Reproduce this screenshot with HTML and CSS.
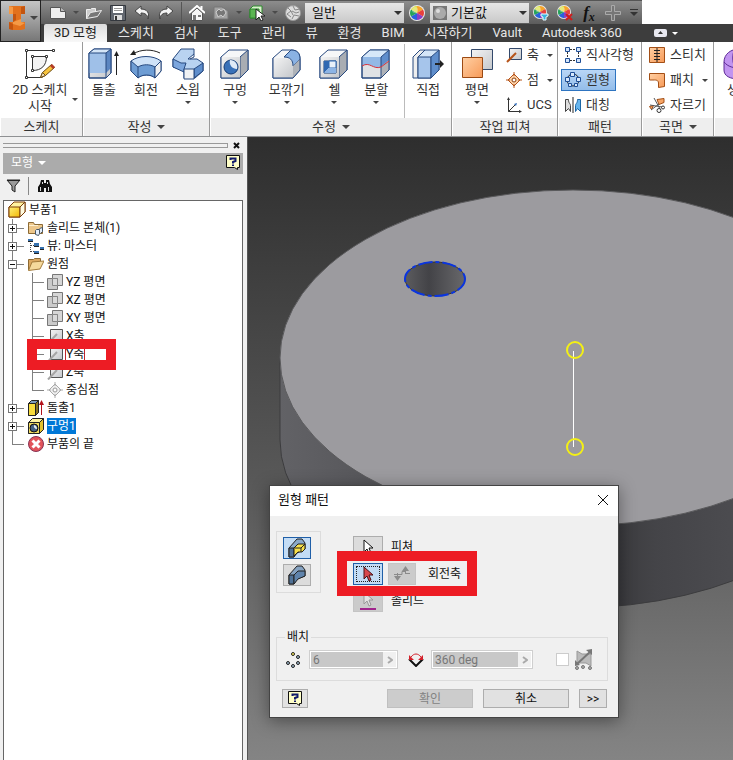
FILE: index.html
```html
<!DOCTYPE html>
<html lang="ko">
<head>
  <meta charset="UTF-8" />
  <meta name="viewport" content="width=device-width, initial-scale=1.0" />
  <title>부품1</title>
  <link rel="stylesheet" href="styles.css">
</head>
<body>
  <svg class="defs" aria-hidden="true">
    <defs>
      <linearGradient id="blue" x1="0" y1="0" x2="1" y2="1"><stop offset="0" stop-color="#cfe2f7"/><stop offset="1" stop-color="#6c9bd6"/></linearGradient>
      <linearGradient id="grey" x1="0" y1="0" x2="1" y2="1"><stop offset="0" stop-color="#f4f4f4"/><stop offset="1" stop-color="#c4c7cb"/></linearGradient>
      <linearGradient id="orange" x1="0" y1="0" x2="1" y2="1"><stop offset="0" stop-color="#ffd0a4"/><stop offset="1" stop-color="#f79a58"/></linearGradient>
      <linearGradient id="yellow" x1="0" y1="0" x2="1" y2="1"><stop offset="0" stop-color="#fff27a"/><stop offset="1" stop-color="#f2b705"/></linearGradient>
    </defs>
    <symbol id="wheel" viewBox="0 0 16 16">
      <circle cx="8" cy="8" r="8" fill="#e9e9e9"/>
      <path d="M8 8V1a7 7 0 0 1 6 3.500z" fill="#f7a52b"/>
      <path d="M8 8l6-3.500a7 7 0 0 1 0 7z" fill="#e8413c"/>
      <path d="M8 8l6 3.500A7 7 0 0 1 8 15z" fill="#8d3cc4"/>
      <path d="M8 8v7a7 7 0 0 1-6-3.500z" fill="#2a62dc"/>
      <path d="M8 8l-6 3.500a7 7 0 0 1 0-7z" fill="#27a35a"/>
      <path d="M8 8L2 4.500A7 7 0 0 1 8 1z" fill="#d8df3a"/>
      <circle cx="6" cy="5" r="3" fill="#fff" opacity=".35"/>
    </symbol>
    <symbol id="plane" viewBox="0 0 16 16">
      <path d="M5.500.5h10v11h-10z" fill="#d6d6d6" stroke="#777"/>
      <path d="M.5 4.500h10v11H.5z" fill="#bdbdbd" fill-opacity=".8" stroke="#777"/>
      <path d="M5.500 4.500h5v7h-5z" fill="#d9d9d9" stroke="#888"/>
    </symbol>
    <symbol id="axis" viewBox="0 0 16 16">
      <path d="M3.500 1.500h12v12h-12z" fill="url(#grey)" stroke="#555"/>
      <path d="M1 15.500L10 6" stroke="#a5a5a5" stroke-width="2"/>
    </symbol>
    <symbol id="help" viewBox="0 0 14 15">
      <path d="M.5.5h13v12h-2v2l-3-2h-8z" fill="#ffffc8" stroke="#111"/>
      <path d="M4.500 5V3.500h5v2.500L7 7v1.500M7 9.500v1.500" fill="none" stroke="#111a6b" stroke-width="2"/>
    </symbol>
    <symbol id="cursor" viewBox="0 0 12 16">
      <path d="M2 1v12l3-3 2 5 2-1-2-5h4z" stroke-width="1"/>
    </symbol>
  </svg>

  <header class="titlebar">
    <button class="app-button" aria-label="Inventor">
      <svg width="18" height="26" viewBox="0 0 18 26">
        <path d="M1 1h16v8h-4v8h4v7l-4 1H5l-4-1v-7h4V9H1z" fill="#e2711d"/>
        <path d="M1 1l4 1v7H1zM5 17l8-3v3l4 1-5 3-7-2z" fill="#f59a45"/>
        <path d="M13 2l4-1v8h-4zM5 9h3v6l-3 2zM1 17l4 2v6l-4-1z" fill="#c4550f"/>
      </svg>
      <span class="caret wide"></span>
    </button>

    <div class="quick-access">
      <button aria-label="새로 만들기"><svg width="16" height="16" viewBox="0 0 16 16"><path d="M.5 2.500h10l5 4v7H.5z" fill="#eee" stroke="#555"/><path d="M10.500 2.500v4h5" fill="#bbb" stroke="#555"/></svg></button>
      <span class="drop"><span class="caret dim"></span></span>
      <button aria-label="열기"><svg width="16" height="16" viewBox="0 0 16 16"><path d="M.5 13.500V4.500h4l1-1h4v3" fill="#ccc" stroke="#eee"/><path d="M.5 13.500l4-6 11-2-4 6z" fill="#777" stroke="#eee"/></svg></button>
      <button aria-label="저장"><svg width="16" height="16" viewBox="0 0 16 16"><path d="M.5.5h15v15H.5z" fill="#636870" stroke="#34383e"/><path d="M3 1h10v7H3z" fill="#fff"/><path d="M4 3.500h8M4 5.500h8" stroke="#999"/><path d="M4 10h8v5H4z" fill="#ddd"/><path d="M5 11h2v4H5z" fill="#333"/></svg></button>
      <button aria-label="실행 취소"><svg width="16" height="16" viewBox="0 0 16 16"><path d="M1 6l6-5v3c6 0 9 4 7 10 0-4-3-6-7-6v3z" fill="#f3f3f3" stroke="#444"/></svg></button>
      <button aria-label="다시 실행"><svg width="16" height="16" viewBox="0 0 16 16"><path d="M15 6L9 1v3c-6 0-9 4-7 10 0-4 3-6 7-6v3z" fill="#f3f3f3" stroke="#444"/></svg></button>
      <span class="rule"></span>
      <button aria-label="홈"><svg width="16" height="16" viewBox="0 0 16 16"><path d="M2.500 8v7.500h11V8L8 3z" fill="#f6f6f6" stroke="#555"/><path d="M0 8l8-7 8 7M12.500 1v3" fill="none" stroke="#fff" stroke-width="2"/><path d="M4 10h3v5H4zM9 10h3v2H9z" fill="#777"/></svg></button>
      <button aria-label="투영"><svg width="16" height="16" viewBox="0 0 16 16"><path d="M1 2h8l6 4v8H1z" fill="#a4a4a4" stroke="#777"/><path d="M3 7l3-3 2 2 3-2 2 4-3 4-2-2-3 2z" fill="#777" stroke="#ccc"/></svg></button>
      <span class="drop"><span class="caret dim"></span></span>
      <button aria-label="선택"><svg width="16" height="16" viewBox="0 0 16 16"><path d="M1 4l3-3h9v9l-3 3H1z" fill="#d9f2cc" stroke="#2f8a2f"/><path d="M1 4h9v9H1z" fill="#5bb552" stroke="#2f8a2f"/><path d="M7 4v11l3-3 2 4 2-1-2-4h4z" fill="#fff" stroke="#222"/></svg></button>
      <span class="drop"><span class="caret dim"></span></span>
      <button aria-label="재질"><svg width="16" height="16" viewBox="0 0 16 16"><circle cx="8" cy="8" r="7.500" fill="#ddd" stroke="#999"/><path d="M3 3l3 3-4 3 4 3M8 1l2 4 5-1M7 6l4 2 3-1M7 14l2-4 5 1M6 6l2 4" fill="none" stroke="#888"/></svg></button>
      <span class="combo"><select aria-label="재질"><option>일반</option></select></span>
      <button class="wheel-button" aria-label="모양"><svg width="16" height="16"><use href="#wheel"/></svg></button>
      <span class="combo">
        <svg width="14" height="14" viewBox="0 0 14 14"><path d="M0 0h14v14H0z" fill="#777"/><circle cx="7" cy="7" r="6" fill="#aaa"/><circle cx="5" cy="5" r="2" fill="#ddd"/></svg>
        <select aria-label="모양"><option>기본값</option></select>
      </span>
      <button aria-label="모양 조정"><svg width="16" height="16" viewBox="0 0 16 16"><use href="#wheel" width="14" height="14"/><path d="M8 9h7v2l-2 1v3h-3v-3l-2-1z" fill="#3bb2df" stroke="#e8f8ff"/></svg></button>
      <button aria-label="모양 지우기"><svg width="16" height="16" viewBox="0 0 16 16"><use href="#wheel" width="14" height="14"/><path d="M9 9l6 6M15 9l-6 6" stroke="#d11b1b" stroke-width="2"/></svg></button>
      <button class="fx" aria-label="매개변수">f<sub>x</sub></button>
      <button aria-label="추가"><svg width="16" height="16" viewBox="0 0 16 16"><path d="M6.500.5h3v6h6v3h-6v6h-3v-6h-6v-3h6z" fill="#777" stroke="#aaa"/></svg></button>
      <button class="more" aria-label="사용자화"><svg width="8" height="8" viewBox="0 0 8 8"><path d="M0 .5h8" stroke="#333"/><path d="M0 3h8L4 7z" fill="#333"/></svg></button>
    </div>

    <nav class="tabs">
      <a class="active" href="#">3D 모형</a>
      <a href="#">스케치</a>
      <a href="#">검사</a>
      <a href="#">도구</a>
      <a href="#">관리</a>
      <a href="#">뷰</a>
      <a href="#">환경</a>
      <a href="#">BIM</a>
      <a href="#">시작하기</a>
      <a href="#">Vault</a>
      <a href="#">Autodesk 360</a>
      <button class="collapse" aria-label="리본 최소화"><svg width="13" height="8" viewBox="0 0 13 8"><rect width="13" height="8" rx="2" fill="#e8e8f0"/><path d="M4 5h5L6.500 2z" fill="#333"/></svg><span class="caret light"></span></button>
    </nav>
  </header>

  <section class="ribbon">
    <div class="panel sketch">
      <div class="tools">
        <button class="big">
          <svg width="32" height="32" viewBox="0 0 32 32"><path d="M2.500 2.500h27M2.500 2.500v27h16" fill="none" stroke="#333"/><path d="M8.500 8.500h14c0 9-5 14-14 14z" fill="#f3f3f3" stroke="#333"/><path d="M1.500 1.500h2v2h-2zM28.500 1.500h2v2h-2zM1.500 28.500h2v2h-2zM7.500 7.500h2v2h-2zM21.500 7.500h2v2h-2zM7.500 21.500h2v2h-2z" fill="#fff" stroke="#333"/><path d="M16.500 29.500l2-5 9-8 3 3-9 8z" fill="#f7c33c" stroke="#6b4b12"/><path d="M16.500 29.500l2-5 3 3z" fill="#f6e3c0" stroke="#6b4b12"/><path d="M26 18l3 3 2-2-3-3z" fill="#b63c28"/></svg>
          <span>2D 스케치<br>시작</span>
        </button>
        <span class="caret side"></span>
      </div>
      <h2>스케치</h2>
    </div>

    <div class="panel create">
      <div class="tools">
        <button class="big">
          <svg width="32" height="32" viewBox="0 0 32 32"><path d="M1 5l5-4h17v24l-5 5H1z" fill="url(#grey)" stroke="#27497f"/><path d="M1 5h17v20H1z" fill="#9fc0e8"/><path d="M1 5l5-4h17l-5 4z" fill="#d4e5f7"/><path d="M18 5l5-4v19l-5 5z" fill="#5b86c1"/><path d="M1 5l5-4h17v24l-5 5H1zM1 5h17v25M18 5l5-4" fill="none" stroke="#27497f"/><path d="M28.500 27V7" stroke="#222" stroke-width="1"/><path d="M26 8l2.500-5L31 8z" fill="#222"/></svg>
          <span>돌출</span>
        </button>
        <button class="big">
          <svg width="32" height="32" viewBox="0 0 32 32"><path d="M1 13c8-6 22-6 30 0v10l-6 7c-4-4-13-4-17 0l-7-7z" fill="#cfe2f7" stroke="#27497f"/><path d="M1 13l7 6c5-3 12-3 17 0v11c-4-4-13-4-17 0l-7-7z" fill="#6e9dd4" stroke="#27497f"/><path d="M25 19l6-6v10l-6 7z" fill="#f2f2f2" stroke="#27497f"/><path d="M8 19v11" stroke="#27497f"/><path d="M3 6c8-5 19-5 27-1" fill="none" stroke="#222"/><path d="M0 7l4-5 2 5z" fill="#222"/></svg>
          <span>회전</span>
        </button>
        <button class="big">
          <svg width="32" height="32" viewBox="0 0 32 32"><path d="M1 11L9 1h13v5l-6 5h9l6 4v8l-8 7H12v-8L1 19z" fill="#b9d3f1" stroke="#27497f"/><path d="M1 11l8 4h5l-2 6v3L1 19z" fill="#7ca6dd" stroke="#27497f"/><path d="M22 21l9-6v8l-9 7z" fill="#5f8ecc" stroke="#27497f"/><path d="M22 6v3l-4 2" fill="none" stroke="#27497f"/><path d="M12 21h10v10H12z" fill="#f0f2f4" stroke="#27497f"/></svg>
          <span>스윕</span>
          <span class="caret"></span>
        </button>
      </div>
      <h2>작성 <span class="caret wide"></span></h2>
    </div>

    <div class="panel modify">
      <div class="tools">
        <button class="big">
          <svg width="32" height="32" viewBox="0 0 32 32"><path d="M2 9l8-7h19v20l-8 8H2z" fill="#f6f7f8" stroke="#27497f"/><path d="M21 9l8-7v20l-8 8z" fill="#a9adb3" stroke="#27497f"/><path d="M2 9h19v21H2z" fill="url(#grey)"/><path d="M2 9v21h19" fill="none" stroke="#27497f"/><circle cx="12" cy="19" r="7" fill="#3971b8" stroke="#153c75"/><path d="M11 12a7 7 0 0 1 7 9 7 7 0 0 1-7-9z" fill="#dfeaf7"/></svg>
          <span>구멍</span>
          <span class="caret"></span>
        </button>
        <button class="big fillet">
          <svg width="32" height="32" viewBox="0 0 32 32"><path d="M2 10l9-8h9c6 0 9 3 9 9v11l-7 8H2z" fill="#f6f7f8" stroke="#27497f"/><path d="M2 10h11c6 0 9 3 9 9v11H2z" fill="url(#grey)"/><path d="M13 9l7-7c6 0 9 3 9 9l-7 7c0-6-3-9-9-9z" fill="#8ab2e4" stroke="#27497f"/><path d="M22 18l7-7v11l-7 8z" fill="#aeb2b8"/><path d="M2 10v20h20l7-8V11" fill="none" stroke="#27497f"/></svg>
          <span>모깎기</span>
          <span class="caret"></span>
        </button>
        <button class="big">
          <svg width="32" height="32" viewBox="0 0 32 32"><path d="M2 9l8-7h19v20l-8 8H2z" fill="#f6f7f8" stroke="#27497f"/><path d="M21 9l8-7v20l-8 8z" fill="#a9adb3" stroke="#27497f"/><path d="M2 9h19v21H2z" fill="url(#grey)"/><path d="M2 9v21h19" fill="none" stroke="#27497f"/><path d="M6 13h12v12H6z" fill="#fff" stroke="#153c75"/><path d="M6 13h5v7l-5 5z" fill="#2f68b2"/><path d="M11 13h7v7h-7z" fill="#e7f0fa" stroke="#2f68b2"/><path d="M6 25l5-5h7v5z" fill="#8cb4e5"/></svg>
          <span>쉘</span>
          <span class="caret"></span>
        </button>
        <button class="big">
          <svg width="32" height="32" viewBox="0 0 32 32"><path d="M2 9l8-7h19v20l-8 8H2z" fill="#e0e2e5" stroke="#27497f"/><path d="M2 9l8-7h19l-8 7z" fill="#d7e8f9"/><path d="M2 9h19v10c-7 3-10-5-19-1z" fill="#93b9e6"/><path d="M21 9l8-7v10l-8 7z" fill="#5f8ecc"/><path d="M21 19l8-7v10l-8 8z" fill="#aeb2b8"/><path d="M21 30V9M2 9l8-7h19v20l-8 8H2zM21 9l8-7" fill="none" stroke="#27497f"/><path d="M2 18c8-5 11 4 19 1l8-6" fill="none" stroke="#d9333b"/></svg>
          <span>분할</span>
          <span class="caret"></span>
        </button>
        <span class="rule"></span>
        <button class="big direct">
          <svg width="32" height="32" viewBox="0 0 32 32"><path d="M1 9l7-7h5v21l-7 7H1z" fill="#eee" stroke="#27497f"/><path d="M6 9l7-7h14v20l-8 8H6z" fill="#d4e5f7" stroke="#27497f"/><path d="M6 9h13v21H6z" fill="#a6c5eb" stroke="#27497f"/><path d="M19 9l8-7v20l-8 8z" fill="#5f8ecc" stroke="#27497f"/><path d="M23 16h6" stroke="#222" stroke-width="2"/><path d="M28 12l4 4-4 4z" fill="#222"/></svg>
          <span>직접</span>
        </button>
      </div>
      <h2>수정 <span class="caret wide"></span></h2>
    </div>

    <div class="panel work">
      <div class="tools">
        <button class="big">
          <svg width="32" height="32" viewBox="0 0 32 32"><path d="M10.500 1.500h21v20h-21z" fill="url(#grey)" stroke="#33496b"/><path d="M1.500 9.500h20v20h-20z" fill="url(#orange)" stroke="#9c4a13"/></svg>
          <span>평면</span>
          <span class="caret"></span>
        </button>
        <div class="stack">
          <button><svg width="16" height="16" viewBox="0 0 16 16"><path d="M3.500 1.500h12v11h-12z" fill="url(#grey)" stroke="#33496b"/><path d="M1 15l9-9" stroke="#b6541a" stroke-width="2"/></svg>축 <span class="caret"></span></button>
          <button><svg width="16" height="16" viewBox="0 0 16 16"><path d="M8 2l6 6-6 6-6-6z" fill="#fbd0a6" stroke="#b6541a"/><path d="M8 0v4M8 12v4M0 8h4M12 8h4" stroke="#b6541a"/><circle cx="8" cy="8" r="2" fill="#fff" stroke="#8c3d0c"/></svg>점 <span class="caret"></span></button>
          <button><svg width="16" height="16" viewBox="0 0 16 16"><path d="M2.500 1v13.500H15M2.500 14.500L10 7" fill="none" stroke="#333"/><path d="M1 3l1.500-3L4 3zM13 13l3 1.500-3 1.500z" fill="#333"/><path d="M8 7l3-1-1 3z" fill="#2b67b5"/></svg>UCS</button>
        </div>
      </div>
      <h2>작업 피쳐</h2>
    </div>

    <div class="panel pattern">
      <div class="tools">
        <div class="stack">
          <button><svg width="16" height="16" viewBox="0 0 16 16"><path d="M5 2.500h6M2.500 5v6M13.500 5v6M5 13.500h6" stroke="#333" stroke-dasharray="2 1"/><path d="M.5.5h4v4h-4zM11.500.5h4v4h-4zM.5 11.500h4v4h-4zM11.500 11.500h4v4h-4z" fill="#d3e4f9" stroke="#1f4e96"/></svg>직사각형</button>
          <button class="on"><svg width="16" height="16" viewBox="0 0 16 16"><circle cx="8" cy="8" r="6" fill="none" stroke="#222"/><path d="M5.500.5h4v4h-4zM11.500 5.500h4v4h-4zM.5 5.500h4v4h-4zM3.500 11.500h3v3h-3zM9.500 11.500h3v3h-3z" fill="#d8e9fc" stroke="#1f4e96"/></svg>원형</button>
          <button><svg width="16" height="16" viewBox="0 0 16 16"><path d="M.5 2.500h3c0 4 2 4 2 6v6l-2-3-3 3z" fill="#ddd" stroke="#444"/><path d="M15.500 2.500h-3c0 4-2 4-2 6v6l2-3 3 3z" fill="#66b5ee" stroke="#1b66a5"/><path d="M8 0v16" stroke="#222"/></svg>대칭</button>
        </div>
      </div>
      <h2>패턴</h2>
    </div>

    <div class="panel surface">
      <div class="tools">
        <div class="stack">
          <button><svg width="16" height="16" viewBox="0 0 16 16"><path d="M.5.5h15v15H.5z" fill="url(#orange)" stroke="#a34f16"/><path d="M8 1v14M5 3.500h6M5 6.500h6M5 9.500h6M5 12.500h6" stroke="#222"/></svg>스티치</button>
          <button><svg width="16" height="16" viewBox="0 0 16 16"><path d="M.5 1.500h15v13l-6 1V11c0-3-3-3-4-3h-5z" fill="url(#orange)" stroke="#a34f16"/></svg>패치 <span class="caret"></span></button>
          <button><svg width="16" height="16" viewBox="0 0 16 16"><path d="M8 2.500l7-1v4l-5 2zM.5 9.500l4-1-2 4z" fill="#f6a566" stroke="#a34f16"/><path d="M5 1l6 11M1 8l12 2M2 13l8-6" stroke="#555"/><circle cx="10" cy="13.500" r="2" fill="#fff" stroke="#333"/><circle cx="14" cy="10.500" r="1.500" fill="#fff" stroke="#333"/></svg>자르기</button>
        </div>
      </div>
      <h2>곡면 <span class="caret wide"></span></h2>
    </div>

    <div class="panel freeform">
      <div class="tools">
        <button class="big">
          <svg width="32" height="32" viewBox="0 0 32 32"><path d="M1 14C1 6 8 1 16 1s15 5 15 13v8c0 6-6 9-15 9S1 28 1 22z" fill="#c194f0" stroke="#5d2a95"/><path d="M1 14c4 5 10 6 15 6s12-2 15-6M12 1c-3 4-3 14 0 18v11" fill="none" stroke="#5d2a95"/></svg>
          <span>생성</span>
        </button>
      </div>
      <h2></h2>
    </div>
  </section>

  <main class="workspace">
    <aside class="browser">
      <div class="grip"><span class="lines"></span><button aria-label="닫기"><svg width="7" height="7" viewBox="0 0 7 7"><path d="M1 1l5 5M6 1L1 6" stroke="#111" stroke-width="2"/></svg></button></div>
      <div class="browser-title"><button class="model">모형 <span class="caret light wide"></span></button><button aria-label="도움말"><svg width="14" height="15"><use href="#help"/></svg></button></div>
      <div class="browser-tools">
        <button aria-label="필터"><svg width="16" height="14" viewBox="0 0 16 14"><path d="M1 1h13l-5 6v6l-3-2V7z" fill="#9a9a9a" stroke="#222"/><path d="M1 1.500h13" stroke="#222"/></svg></button>
        <span class="rule"></span>
        <button aria-label="찾기"><svg width="16" height="14" viewBox="0 0 16 14"><path d="M4 1h3v3h2V1h3l1 4 2 3v5H9V9H7v4H1V8l2-3z" fill="#111"/><path d="M3.500 8v4M11.500 8v4M5.500 3v2M10.500 3v2" stroke="#ddd"/></svg></button>
      </div>

      <div class="tree">
        <div class="node root"><svg width="18" height="18" viewBox="0 0 18 18"><path d="M1 6l5-5h11v10l-5 5H1z" fill="#fff3a0" stroke="#7a3d08"/><path d="M1 6h11v10H1z" fill="url(#yellow)" stroke="#7a3d08"/><path d="M12 6l5-5v10l-5 5z" fill="#fffbe0" stroke="#7a3d08"/></svg>부품1</div>
        <ul class="branch">
          <li><div class="node"><button class="toggle plus" aria-label="펼치기"></button><svg width="16" height="16" viewBox="0 0 16 16"><path d="M.5 13.500v-11h5l1 2h8v9z" fill="#edc78b" stroke="#8c6a34"/><path d="M1 5.500h9" stroke="#fff0cf"/><path d="M7.500 10.500v4l3 1 1-2v-4h-3zM11.500 8.500l3-1v4l-2 2" fill="#e4eefb" stroke="#456"/></svg>솔리드 본체(1)</div></li>
          <li><div class="node"><button class="toggle plus" aria-label="펼치기"></button><svg width="16" height="16" viewBox="0 0 16 16"><path d="M2.500 3v11M3 7.500h4M3 13.500h4M10 8.500h2" stroke="#444" stroke-dasharray="1 1"/><path d="M0 1h5v2H0zM6 5h5v3H6zM12 9h4v2h-4zM6 13h5v2H6z" fill="#3671ae"/><path d="M0 3.500h5M6 8.500h5M12 11.500h4M6 15.500h5" stroke="#222"/></svg>뷰: 마스터</div></li>
          <li>
            <div class="node"><button class="toggle" aria-label="접기"></button><svg width="16" height="16" viewBox="0 0 16 16"><path d="M.5 14V3.500h5l1-1h6v3" fill="#dba861" stroke="#8c6a34"/><path d="M.5 14.500L4 6l12-1-4 8z" fill="#f5d99c" stroke="#a37b3c"/></svg>원점</div>
            <ul class="branch">
              <li><div class="node"><svg width="16" height="16"><use href="#plane"/></svg>YZ 평면</div></li>
              <li><div class="node"><svg width="16" height="16"><use href="#plane"/></svg>XZ 평면</div></li>
              <li><div class="node"><svg width="16" height="16"><use href="#plane"/></svg>XY 평면</div></li>
              <li><div class="node"><svg width="16" height="16"><use href="#axis"/></svg>X축</div></li>
              <li class="marked"><div class="node"><svg width="16" height="16"><use href="#axis"/></svg><span class="hover">Y축</span></div></li>
              <li><div class="node"><svg width="16" height="16"><use href="#axis"/></svg>Z축</div></li>
              <li><div class="node"><svg width="16" height="16" viewBox="0 0 16 16"><path d="M8 2l6 6-6 6-6-6z" fill="#eee" stroke="#aaa"/><path d="M8 0v4M8 12v4M0 8h4M12 8h4" stroke="#aaa"/><circle cx="8" cy="8" r="2" fill="#fff" stroke="#999"/></svg>중심점</div></li>
            </ul>
          </li>
          <li><div class="node"><button class="toggle plus" aria-label="펼치기"></button><svg width="16" height="16" viewBox="0 0 16 16"><path d="M.5 3.500l3-3h7v12l-3 3h-7z" fill="#7d9cbd" stroke="#222"/><path d="M7.500 3.500l3-3v12l-3 3z" fill="#8a7420" stroke="#222"/><path d="M.5 3.500h7v12h-7z" fill="#f8dc3c" stroke="#222"/><path d="M13.500 15V4" stroke="#b4121b"/><path d="M11 5l2.500-5L16 5z" fill="#b4121b"/></svg>돌출1</div></li>
          <li><div class="node"><button class="toggle plus" aria-label="펼치기"></button><svg width="16" height="16" viewBox="0 0 16 16"><path d="M.5 4.500l4-4h11v11l-4 4H.5z" fill="#fdf3a0" stroke="#222"/><path d="M11.500 4.500l4-4v11l-4 4z" fill="#e5c22c" stroke="#222"/><path d="M.5 4.500h11v11H.5z" fill="#f0da60" stroke="#222"/><circle cx="6" cy="10" r="4" fill="#445f80" stroke="#111"/><path d="M6 7a4 4 0 0 1 3 4 3 3 0 0 1-3-4z" fill="#e3ecf5"/></svg><span class="selected">구멍1</span></div></li>
          <li><div class="node"><svg width="16" height="16" viewBox="0 0 16 16"><circle cx="8" cy="8" r="7.500" fill="#e2545a" stroke="#835"/><path d="M4.500 4.500l7 7M11.500 4.500l-7 7" stroke="#fff" stroke-width="3"/></svg>부품의 끝</div></li>
        </ul>
      </div>
    </aside>

    <section class="viewport">
      <svg class="scene" width="100%" height="100%">
        <defs>
          <linearGradient id="side" gradientUnits="userSpaceOnUse" x1="32" y1="0" x2="618" y2="0">
            <stop offset="0" stop-color="#626266"/>
            <stop offset=".25" stop-color="#505054"/>
            <stop offset=".56" stop-color="#39393c"/>
            <stop offset=".64" stop-color="#444448"/>
            <stop offset="1" stop-color="#58585c"/>
          </linearGradient>
          <linearGradient id="bore" x1="0" y1="0" x2="1" y2="0">
            <stop offset="0" stop-color="#5c5c5f"/>
            <stop offset=".4" stop-color="#434347"/>
            <stop offset="1" stop-color="#68686b"/>
          </linearGradient>
        </defs>
        <path d="M32 220v82a293 168 0 0 0 586 0v-82z" fill="url(#side)" stroke="#3c3c3e"/>
        <ellipse cx="325" cy="220" rx="293" ry="168" fill="#9c9b9f" stroke="#5a5a5c"/>
        <ellipse cx="187" cy="141" rx="30" ry="17" fill="url(#bore)" stroke="#333"/>
        <ellipse cx="187" cy="141" rx="30" ry="17" fill="none" stroke="#0a35e0" stroke-width="2" stroke-dasharray="14 3 4 3"/>
        <path d="M325.500 213v96" stroke="#fff"/>
        <circle cx="327" cy="212" r="8" fill="none" stroke="#f4f014" stroke-width="2"/>
        <circle cx="327" cy="309" r="8" fill="none" stroke="#f4f014" stroke-width="2"/>
      </svg>

      <form class="dialog">
        <div class="dialog-title">원형 패턴<button type="button" aria-label="닫기"><svg width="12" height="12" viewBox="0 0 12 12"><path d="M1 1l10 10M11 1L1 11" stroke="#111"/></svg></button></div>
        <div class="dialog-body">
          <div class="pick">
            <div class="modes">
              <button type="button" class="tool on" aria-label="개별 피쳐 패턴"><svg width="18" height="20" viewBox="0 0 18 20"><path d="M1 10l8-9h5l3 4v6l-8 4-3 4H1z" fill="#8aa9c9" stroke="#222"/><path d="M1 10h5v9H1z" fill="#4f7196" stroke="#222"/><path d="M6 10l4-4h7v5l-3 3h-4l-4 4z" fill="#f7e04b" stroke="#222"/><path d="M7 10h6l4-4M13 10v4" fill="none" stroke="#222"/></svg></button>
              <button type="button" class="tool" aria-label="솔리드 패턴"><svg width="18" height="20" viewBox="0 0 18 20"><path d="M1 10l8-9h5l3 4v6l-8 3-3 5H1z" fill="#86a3c2" stroke="#222"/><path d="M1 10h5v9H1z" fill="#4f7196" stroke="#222"/><path d="M6 10l4-4h7v5l-7 3-4 5z" fill="#5f83ab" stroke="#222"/></svg></button>
            </div>
            <div class="selectors">
              <div class="selector"><button type="button" class="tool wide" aria-label="피쳐"><svg class="white" width="12" height="16"><use href="#cursor"/></svg></button><span>피쳐</span></div>
              <div class="selector marked"><button type="button" class="tool wide on focus" aria-label="회전축"><svg class="red" width="12" height="16"><use href="#cursor"/></svg></button><button type="button" class="tool off" aria-label="반전" disabled><svg width="18" height="16" viewBox="0 0 18 16"><path d="M1 8.500h3M4.500 7v6M4 8.500h5v-3h4M12.500 2v6M13 7.500h4" fill="none" stroke="#8b8b8b"/><path d="M1 10h7l-3.500 5zM9 5h7l-3.500-5z" fill="#8b8b8b"/></svg></button><span class="axis-label">회전축</span></div>
              <div class="selector"><button type="button" class="tool wide off" aria-label="솔리드" disabled><svg class="faded" width="16" height="20" viewBox="0 0 16 20"><use href="#cursor" x="2" width="12" height="16"/><path class="underline" d="M0 18h16"/></svg></button><span>솔리드</span></div>
            </div>
          </div>

          <fieldset>
            <legend>배치</legend>
            <label for="count"><svg width="16" height="16" viewBox="0 0 16 16"><g fill="#9cb4c8" stroke="#222"><circle cx="8" cy="2" r="1.500" fill="#ffef5c"/><circle cx="13" cy="5" r="1.500"/><circle cx="13" cy="11" r="1.500"/><circle cx="8" cy="14" r="1.500"/><circle cx="3" cy="11" r="1.500"/></g></svg></label>
            <span class="spin count"><input id="count" type="text" value="6" disabled><button type="button" aria-label="개수 옵션" disabled><svg width="6" height="8" viewBox="0 0 6 8"><path d="M1 1l4 3-4 3" fill="none" stroke="#aaa" stroke-width="2"/></svg></button></span>
            <label class="angle-label" for="angle"><svg width="16" height="14" viewBox="0 0 16 14"><path d="M1 6l7 7 7-7" fill="none" stroke="#111" stroke-width="2"/><path d="M3 4c3-4 7-4 10 0" fill="none" stroke="#d3202a"/><path d="M1 2v5h5zM15 2v5h-5z" fill="#d3202a"/></svg></label>
            <span class="spin angle"><input id="angle" type="text" value="360 deg" disabled><button type="button" aria-label="각도 옵션" disabled><svg width="6" height="8" viewBox="0 0 6 8"><path d="M1 1l4 3-4 3" fill="none" stroke="#aaa" stroke-width="2"/></svg></button></span>
            <input id="mid" class="mid" type="checkbox" disabled>
            <label for="mid"><svg width="20" height="22" viewBox="0 0 20 22"><path d="M3 2l5 3h9v12l-5-3H3z" fill="#bbb" stroke="#999"/><path d="M3 15L17 2" stroke="#777" stroke-width="2"/><path d="M1 17v-6l5 5zM18 0v6l-6-5z" fill="#777"/><g fill="#aaa" stroke="#777"><circle cx="3" cy="19" r="1.500"/><circle cx="9" cy="18" r="1.500"/><circle cx="16" cy="19" r="1.500"/></g></svg></label>
          </fieldset>

          <div class="actions">
            <button type="button" class="help" aria-label="도움말"><svg width="14" height="15"><use href="#help"/></svg></button>
            <button type="submit" class="action" disabled>확인</button>
            <button type="button" class="action">취소</button>
            <button type="button" class="expand">&gt;&gt;</button>
          </div>
        </div>
      </form>
    </section>
  </main>
</body>
</html>
```
FILE: styles.css
```css
*, *::before, *::after {
  box-sizing: border-box;
}
html, body {
  margin: 0;
  padding: 0;
  height: 100%;
}
body {
  display: flex;
  flex-direction: column;
  overflow: hidden;
  background: white;
  color: #333;
  font-family: Roboto, "Noto Sans CJK KR", sans-serif;
  font-size: 13px;
  line-height: 16px;
}
button {
  margin: 0;
  padding: 0;
  border: none;
  background: transparent;
  color: inherit;
  font: inherit;
}
svg {
  display: block;
  flex: none;
}
.defs {
  position: absolute;
  width: 0;
  height: 0;
}
.caret {
  display: inline-block;
  flex: none;
  width: 0;
  height: 0;
  border: 3px solid transparent;
  border-top-color: #444;
  border-bottom: none;
}
.caret.wide {
  border-width: 4px 4px 0;
}
.caret.dim {
  border-top-color: #4a4a4a;
}
.caret.light {
  border-top-color: white;
}

/* title bar */
.titlebar {
  flex: none;
  display: grid;
  grid-template-columns: 41px 1fr;
  grid-template-rows: 24px 18px;
}
.app-button {
  grid-row: 1 / 3;
  position: relative;
  display: flex;
  align-items: center;
  gap: 4px;
  padding: 0 0 6px 7px;
  border: 1px solid #222;
  background: linear-gradient(#c4c4c4, #777);
}
.quick-access {
  display: flex;
  align-items: center;
  justify-self: start;
  padding-left: 5px;
  border-top: 1px solid #555;
  background: linear-gradient(#8d8d8d, #5c5c5c);
}
.quick-access button {
  display: flex;
  justify-content: center;
  width: 24px;
}
.quick-access .drop {
  display: flex;
  justify-content: center;
  width: 12px;
}
.quick-access .rule {
  width: 1px;
  height: 22px;
  margin: 0 3px;
  background: #555;
}
.quick-access .wheel-button {
  width: 26px;
}
.quick-access .fx {
  color: #111;
  font: italic bold 17px/16px "Liberation Serif", serif;
}
.quick-access .fx sub {
  align-self: flex-end;
  font-size: 12px;
  line-height: 8px;
}
.quick-access .more {
  width: 17px;
}
.combo {
  display: flex;
  align-items: center;
  width: 99px;
  height: 20px;
  padding: 0 2px 0 3px;
  background: linear-gradient(#e6e6e6, #c9c9c9);
}
.combo::after {
  content: "";
  border: 4px solid transparent;
  border-top-color: #333;
  border-bottom: none;
}
.combo select {
  flex: 1;
  min-width: 0;
  height: 20px;
  padding: 0 4px;
  border: none;
  appearance: none;
  background: transparent;
  color: #111;
  font: inherit;
}
.tabs {
  display: flex;
  padding-left: 3px;
  background: #3d3d3d;
  box-shadow: -41px 0 #3d3d3d;
}
.tabs a {
  padding: 0 10px;
  color: #e6e6e6;
  line-height: 17px;
  text-decoration: none;
  white-space: nowrap;
}
.tabs a.active {
  margin-right: 1px;
  border-radius: 2px 2px 0 0;
  background: linear-gradient(#dcdcdc, #f8f8f8);
  color: #222;
}
.collapse {
  display: flex;
  align-items: center;
  gap: 5px;
  margin-left: 22px;
}

/* ribbon */
.ribbon {
  flex: none;
  display: flex;
  height: 95px;
  overflow: hidden;
  border-bottom: 1px solid #8f9193;
}
.panel {
  flex: none;
  display: flex;
  flex-direction: column;
  border-right: 1px solid #9a9a9a;
}
.panel h2 {
  display: flex;
  align-items: center;
  justify-content: center;
  gap: 6px;
  height: 18px;
  margin: 0 0 0 1px;
  background: #eeeeee;
  font-size: 13px;
  font-weight: normal;
}
.tools {
  flex: 1;
  display: flex;
  padding-top: 2px;
}
.big {
  display: flex;
  flex-direction: column;
  align-items: center;
  width: 42px;
  padding-top: 4px;
  white-space: nowrap;
}
.big svg {
  margin-bottom: 2px;
}
.big .caret {
  margin-top: 3px;
}
.sketch {
  width: 83px;
}
.sketch .big {
  width: 72px;
  padding-left: 8px;
}
.caret.side {
  align-self: flex-end;
  margin-bottom: 17px;
}
.create {
  width: 127px;
}
.modify {
  width: 242px;
}
.modify .big:first-child {
  width: 50px;
}
.modify .fillet {
  width: 54px;
}
.modify .rule {
  width: 1px;
  margin-left: 7px;
  background: #bbb;
}
.modify .direct {
  width: 46px;
}
.work {
  width: 106px;
}
.work .big {
  width: 50px;
}
.pattern {
  width: 84px;
}
.surface {
  width: 72px;
}
.freeform {
  width: 84px;
}
.freeform .tools {
  padding-left: 4px;
}
.stack {
  display: flex;
  flex-direction: column;
  padding-left: 3px;
  gap: 3px;
}
.stack button {
  display: flex;
  align-items: center;
  align-self: flex-start;
  gap: 5px;
  height: 22px;
  padding: 0 3px;
  border: 1px solid transparent;
  white-space: nowrap;
}
.work .stack {
  padding-left: 0;
}
.stack .caret {
  margin-left: 3px;
}
.stack .on {
  padding-right: 5px;
  border-color: #2e74c0;
  background: linear-gradient(#b9d6f6, #93bdea);
}

/* model browser */
.workspace {
  flex: 1;
  display: flex;
  min-height: 0;
}
.browser {
  flex: none;
  display: flex;
  flex-direction: column;
  width: 248px;
  padding: 0 4px 0 3px;
  border-right: 1px solid #555;
  background: #f0f0f0;
  font-size: 12px;
}
.grip {
  display: flex;
  align-items: center;
  gap: 5px;
  height: 16px;
}
.grip .lines {
  flex: 1;
  height: 5px;
  border: 1px solid #999;
  border-left: none;
}
.grip button {
  margin-right: 3px;
}
.browser-title {
  display: flex;
  align-items: center;
  justify-content: space-between;
  height: 21px;
  padding: 0 3px 2px 8px;
  background: #ababab;
  color: white;
}
.browser-title .model {
  display: flex;
  align-items: center;
  gap: 5px;
}
.browser-tools {
  display: flex;
  align-items: center;
  gap: 6px;
  height: 26px;
  padding: 0 0 2px 3px;
}
.browser-tools .rule {
  width: 1px;
  height: 18px;
  margin-right: 2px;
  background: #888;
}
.tree {
  flex: 1;
  border: 1px solid #666;
  border-bottom: none;
  background: white;
  color: #111;
}
.branch {
  margin: 0;
  padding: 0;
  list-style: none;
}
.branch > li {
  background:
    linear-gradient(#808080, #808080) 8px 0 / 1px 100% no-repeat,
    linear-gradient(#808080, #808080) 8px 9px / 12px 1px no-repeat;
}
.branch > li:last-child {
  background-size: 1px 9px, 12px 1px;
}
.node {
  display: flex;
  align-items: center;
  gap: 3px;
  height: 18px;
  padding-left: 24px;
  white-space: nowrap;
}
.node.root {
  padding-left: 4px;
}
.branch .branch {
  margin-left: 20px;
}
.branch .branch .node {
  padding-left: 23px;
}
.toggle {
  width: 9px;
  height: 9px;
  margin: 0 8px 0 -20px;
  border: 1px solid #777;
  background: linear-gradient(#111, #111) center / 5px 1px no-repeat white;
}
.toggle.plus {
  background:
    linear-gradient(#111, #111) center / 5px 1px no-repeat,
    linear-gradient(#111, #111) center / 1px 5px no-repeat white;
}
.node .hover {
  box-shadow: 0 0 0 1px #c0272d;
}
.node .selected {
  background: #0078d7;
  color: white;
}

/* red callout frames */
.marked {
  position: relative;
}
.marked::after {
  content: "";
  position: absolute;
  border: 10px solid #ed1c24;
}
.tree .marked::after {
  top: -6px;
  left: 3px;
  width: 89px;
  height: 31px;
}
.selector.marked::after {
  top: -12px;
  left: -16px;
  width: 140px;
  height: 45px;
}

/* 3D view */
.viewport {
  flex: 1;
  position: relative;
  border-top: 1px solid #333;
  background: linear-gradient(#2e2e2e, #585858 55%, #848484);
}
.scene {
  position: absolute;
  inset: 0;
}

/* pattern dialog */
.dialog {
  position: absolute;
  top: 347px;
  left: 21px;
  width: 350px;
  border: 1px solid #444;
  background: #f0f0f0;
  box-shadow: 0 3px 16px rgba(0, 0, 0, 0.4);
  color: #111;
  font-size: 12px;
}
.dialog-title {
  display: flex;
  align-items: center;
  justify-content: space-between;
  height: 30px;
  padding: 0 9px 2px 8px;
  background: white;
  font-size: 13px;
}
.dialog-body {
  padding: 15px 10px 9px 6px;
}
.pick {
  display: flex;
  gap: 32px;
}
.modes {
  display: flex;
  flex-direction: column;
  align-self: flex-start;
  gap: 5px;
  padding: 5px 9px 6px 6px;
  border: 1px solid #dcdcdc;
}
.selectors {
  display: flex;
  flex-direction: column;
  gap: 5px;
  padding-top: 5px;
}
.selector {
  display: flex;
  align-items: center;
  gap: 5px;
}
.selector span {
  padding-left: 3px;
}
.selector .axis-label {
  padding-left: 7px;
}
.tool {
  display: flex;
  align-items: center;
  justify-content: center;
  width: 28px;
  height: 22px;
  border: 1px solid #adadad;
  background: #dcdcdc;
}
.tool.wide {
  width: 30px;
}
.tool.on {
  border-color: #1f5fa8;
  background: #c3dcf5;
}
.tool.focus {
  outline: 1px dotted #222;
  outline-offset: -4px;
}
.tool.off {
  border-color: #c4c4c4;
  background: #cbcbcb;
}
.tool .white {
  fill: white;
  stroke: #111;
}
.tool .red {
  fill: #d8474d;
  stroke: #4a1016;
}
.tool .faded {
  fill: #e4e4e4;
  stroke: #999;
}
.tool .underline {
  stroke: #a0268c;
  stroke-width: 2px;
}
fieldset {
  display: flex;
  align-items: center;
  height: 52px;
  margin: 17px 0 0;
  padding: 0 13px 6px 8px;
  border: 1px solid #dcdcdc;
}
legend {
  padding: 0 2px;
}
.spin {
  display: flex;
  height: 19px;
  margin-left: 8px;
  padding: 1px;
  border: 1px solid #cfcfcf;
  background: white;
}
.spin.count {
  width: 89px;
}
.spin.angle {
  width: 102px;
  margin-left: 7px;
}
.spin input {
  flex: 1;
  min-width: 0;
  padding: 0 2px;
  border: none;
  background: #c8c8c8;
  color: #777;
  font: inherit;
}
.spin button {
  display: flex;
  align-items: center;
  justify-content: center;
  width: 13px;
  background: #f0f0f0;
}
.angle-label {
  margin-left: 10px;
}
.mid {
  appearance: none;
  width: 13px;
  height: 13px;
  margin: 0 5px 0 auto;
  border: 1px solid #ccc;
  background: white;
}
.actions {
  display: flex;
  gap: 10px;
  margin-top: 8px;
  padding: 0 1px 0 6px;
}
.actions button {
  display: flex;
  align-items: center;
  justify-content: center;
  height: 19px;
  border: 1px solid #adadad;
  background: #e1e1e1;
}
.actions .help {
  width: 26px;
  margin-right: auto;
}
.actions .action {
  width: 86px;
}
.actions .action:disabled {
  border-color: #bfbfbf;
  background: #cccccc;
  color: #838383;
}
.actions .expand {
  width: 28px;
}
```
